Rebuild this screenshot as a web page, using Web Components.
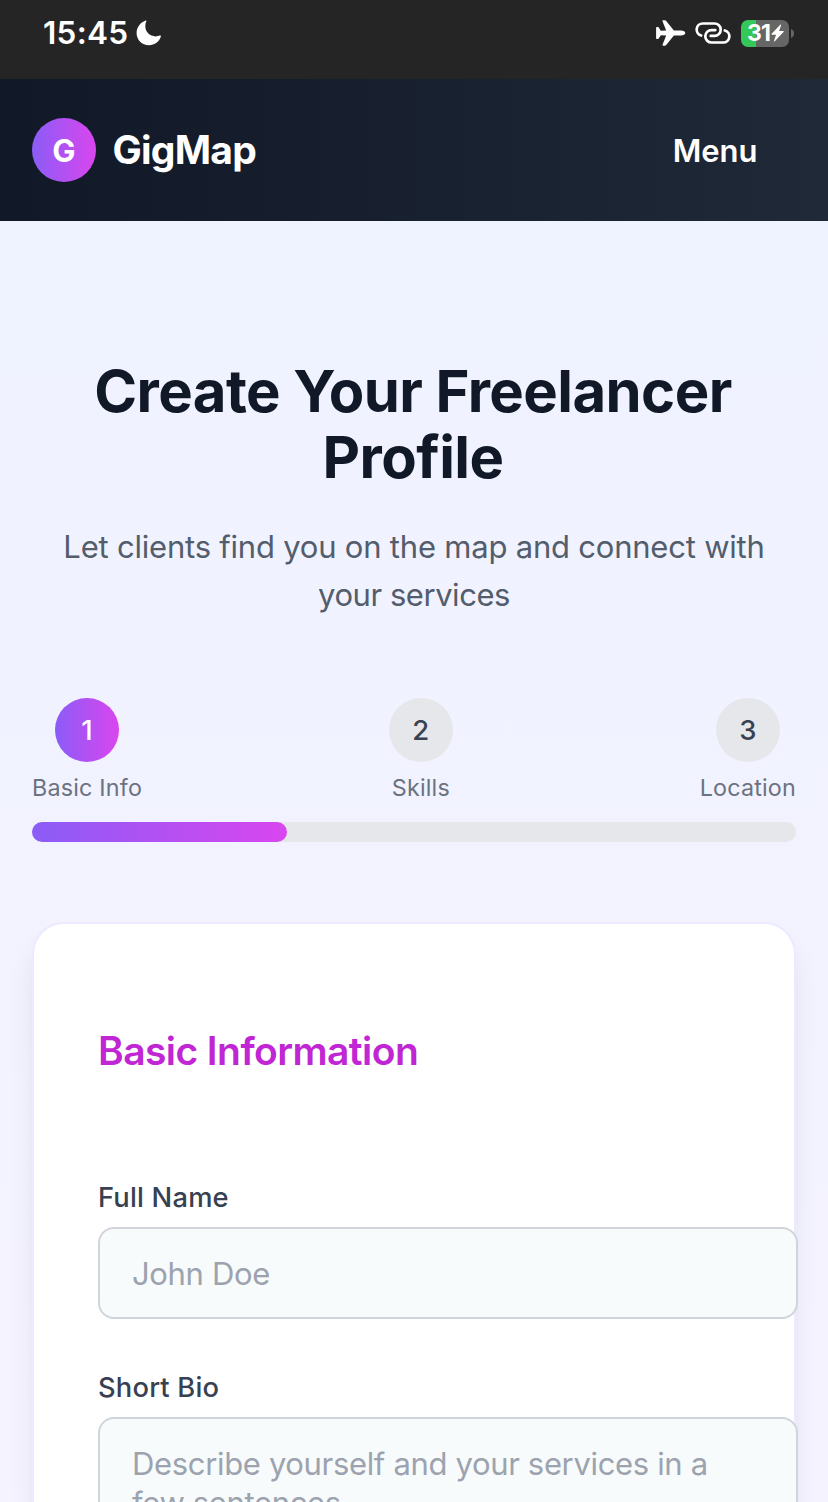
<!DOCTYPE html>
<html lang="en">
<head>
<meta charset="utf-8">
<title>GigMap</title>
<style>
html{height:100%;overflow:hidden}
body{margin:0;height:1502px;overflow:hidden;font-family:Inter,"Liberation Sans",sans-serif;color:#111827}
</style>
</head>
<body>
<gig-app></gig-app>
<script>
const define = (name, html) => {
  const t = document.createElement('template');
  t.innerHTML = html;
  customElements.define(name, class extends HTMLElement {
    constructor() {
      super();
      this.attachShadow({mode: 'open'}).append(t.content.cloneNode(true));
    }
  });
};

define('status-bar', `
<style>
:host{display:flex;align-items:flex-start;justify-content:space-between;height:79px;box-sizing:border-box;padding:14px 34px 0 43px;background:#252525;color:#fff}
.l,.r{display:flex;align-items:center;height:38px}
.t{width:85px;white-space:nowrap;font-size:31.500px;font-weight:570;line-height:38px;letter-spacing:.3px}
svg{display:block}
.l svg{margin-left:8px}
.link{margin-left:9px}
.bat{margin-left:10px;display:flex;align-items:center}
.cell{width:48px;height:27px;box-sizing:border-box;padding-left:6px;border-radius:7px;background:linear-gradient(90deg,#34c759 15px,#666 15px);display:flex;align-items:center;font-size:23px;font-weight:700;line-height:27px;letter-spacing:-.9px}
.cell svg{margin-left:1px}
.nub{margin-left:2px}
</style>
<div class="l"><span class="t">15:45</span>
<svg width="26" height="26" viewBox="0 0 26 26"><path fill="#fff" d="M9.600.6c.5-.3 1 .1.7.7C9.600 3 9.200 4.700 9.300 6.600c.2 5.600 4.600 9.800 10.300 9.800 1.600 0 3-.3 4.300-.8.700-.300 1.200.1 1 .700C23.400 21.800 18.600 25.300 12.900 25.300 6 25.300.6 20 .6 13 .6 7.500 4.200 2.600 9.600.6z"/></svg></div>
<div class="r">
<svg width="30" height="28" viewBox="0 0 30 28"><path fill="#fff" d="M29.300 14c0 1.300-1.800 2.400-4.300 2.400h-6.500c-.4 0-.7.1-1 .5L10.200 26c-.4.500-.8.700-1.300.7H7.100c-.5 0-.8-.4-.6-.9l3.700-9.300-5.400-.2-2.100 3.300c-.2.300-.4.400-.8.400H.8c-.4 0-.7-.3-.7-.7V8.700c0-.4.3-.7.700-.7h1.100c.4 0 .600.1.8.4l2.100 3.300 5.400-.2-3.700-9.300c-.2-.5.1-.9.600-.9h1.800c.500 0 .900.200 1.300.700l7.300 9.100c.300.400.600.500 1 .500H25c2.500 0 4.300 1.100 4.300 2.400z"/></svg>
<svg class="link" width="36" height="22" viewBox="0 0 36 22" fill="none" stroke="#fff" stroke-width="2.700" stroke-linecap="round"><path d="M6.200 13.500A6.100 6.100 0 0 1 7.700 1.500h11.800a6.200 6.200 0 0 1 0 12.400h-3.800"/><path d="M29.800 8.500a6.100 6.100 0 0 1-1.500 12H16.500a6.200 6.200 0 0 1 0-12.400h3.800"/></svg>
<div class="bat"><div class="cell"><span>31</span><svg width="13" height="18" viewBox="0 0 13 17"><path fill="#fff" d="M9.300.2c.400-.4 1-.1.8.5L8.100 6.600h4c.6 0 .8.6.4 1L3.800 16.800c-.4.400-1 .1-.8-.500L5.100 10.200H1C.4 10.200.2 9.700.6 9.300z"/></svg></div>
<svg class="nub" width="3" height="9" viewBox="0 0 3 9"><path fill="#666" d="M0 0c2 .8 3 2.400 3 4.500S2 8.200 0 9z"/></svg></div>
</div>`);

define('site-header', `
<style>
:host{display:flex;align-items:center;height:142px;box-sizing:border-box;padding:0 70.500px 0 32px;background:linear-gradient(90deg,#111827,#1f2937);color:#fff}
.logo{width:64px;height:64px;box-sizing:border-box;padding-top:2px;border-radius:50%;background:linear-gradient(90deg,#8b5cf6,#d946ef);display:flex;align-items:center;justify-content:center;font-size:31px;font-weight:700;line-height:48px}
.name{margin-left:16.500px;padding-bottom:1px;font-size:39px;font-weight:700;line-height:56px;letter-spacing:-.75px}
.menu{margin-left:auto;padding-top:1px;font-size:31px;font-weight:600;line-height:48px}
</style>
<div class="logo"><span class="g">G</span></div><span class="name">GigMap</span><span class="menu">Menu</span>`);

define('page-intro', `
<style>
:host{display:block;text-align:center}
h1{margin:0 2px 0 0;font-size:58px;font-weight:700;line-height:66px;letter-spacing:-.570px;white-space:nowrap}
p{margin:33px 0 1px;font-size:31px;line-height:48px;letter-spacing:-.21px;color:#535d6b;white-space:nowrap}
.l2{letter-spacing:-.45px}
</style>
<h1><span>Create Your Freelancer</span><br><span>Profile</span></h1>
<p><span>Let clients find you on the map and connect with</span><br><span class="l2">your services</span></p>`);

define('progress-step', `
<style>
:host{display:flex;flex-direction:column;align-items:center}
.dot{width:64px;height:64px;box-sizing:border-box;padding-bottom:1px;border-radius:50%;background:#e5e7eb;color:#374151;display:flex;align-items:center;justify-content:center;font-size:27.500px;font-weight:500}
:host([active]) .dot{background:linear-gradient(90deg,#8b5cf6,#d946ef);color:#fff}
.lab{margin-top:10px;font-size:23.300px;line-height:32px;letter-spacing:.2px;color:#6b7280;white-space:nowrap}
</style>
<div class="dot"><slot name="n"></slot></div><div class="lab"><slot></slot></div>`);

define('step-progress', `
<style>
:host{display:flow-root}
.steps{display:flex;justify-content:space-between}
.bar{margin-top:18px;height:20px;border-radius:10px;background:#e5e7eb}
.fill{width:255px;height:20px;border-radius:10px;background:linear-gradient(90deg,#8b5cf6,#d946ef)}
</style>
<div class="steps">
<progress-step active><span slot="n">1</span><span>Basic Info</span></progress-step>
<progress-step><span slot="n">2</span><span>Skills</span></progress-step>
<progress-step><span slot="n">3</span><span>Location</span></progress-step>
</div><div class="bar"><div class="fill"></div></div>`);

define('form-field', `
<style>
:host{display:block}
label{display:block;padding-top:1px;font-size:27.300px;font-weight:500;line-height:42px;letter-spacing:.2px;color:#374151}
.box{margin-top:8px;width:700px;height:92px;box-sizing:border-box;border:2px solid #d1d5db;border-radius:16px;background:#f8fbfc;padding:25px 32px;font-size:31px;line-height:39px;letter-spacing:-.34px;color:#9ca3af}
:host([tall]) .box{height:200px}
</style>
<label><slot name="label"></slot></label><div class="box"><slot></slot></div>`);

define('form-card', `
<style>
:host{display:block;box-sizing:border-box;height:900px;border:2px solid #ede9fe;border-radius:32px;background:#fff;box-shadow:0 20px 30px -6px rgba(0,0,0,.1),0 8px 12px -8px rgba(0,0,0,.1);padding:97px 0 0 64px}
h2{margin:0;font-size:39px;font-weight:600;line-height:60px;letter-spacing:-.57px;color:#c026d3}
.f1{margin-top:95px}.f2{margin-top:47px}
</style>
<h2><span>Basic Information</span></h2>
<form-field class="f1"><span slot="label">Full Name</span><span>John Doe</span></form-field>
<form-field class="f2" tall><span slot="label">Short Bio</span><span>Describe yourself and your services in a</span><br><span>few sentences...</span></form-field>`);

define('gig-app', `
<style>
:host{display:block;height:1502px;overflow:hidden;background:linear-gradient(180deg,#eef2ff,#f5f3ff)}
main{display:flex;flex-direction:column;padding:137px 32px 0}
page-intro{display:flow-root}
step-progress{margin-top:78px}
form-card{margin-top:80px}
</style>
<status-bar></status-bar><site-header></site-header>
<main><page-intro></page-intro><step-progress></step-progress><form-card></form-card></main>`);
</script>
</body>
</html>
